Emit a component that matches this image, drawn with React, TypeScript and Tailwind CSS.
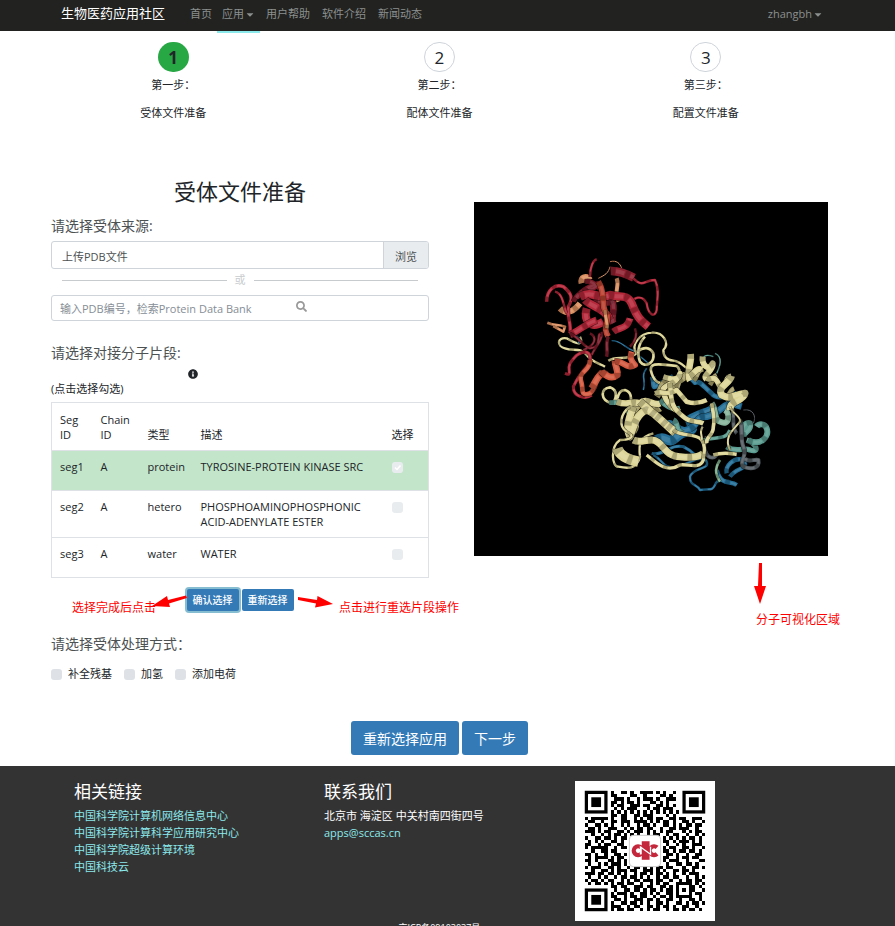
import React from "react";
import { FaCaretDown, FaInfoCircle, FaSearch } from "react-icons/fa";

interface Segment {
  id: string;
  chain: string;
  type: string;
  description: string;
  selected: boolean;
}

const segments: Segment[] = [
  { id: "seg1", chain: "A", type: "protein", description: "TYROSINE-PROTEIN KINASE SRC", selected: true },
  { id: "seg2", chain: "A", type: "hetero", description: "PHOSPHOAMINOPHOSPHONIC ACID-ADENYLATE ESTER", selected: false },
  { id: "seg3", chain: "A", type: "water", description: "WATER", selected: false },
];

const steps = [
  { label: "第一步：", name: "受体文件准备", active: true },
  { label: "第二步：", name: "配体文件准备", active: false },
  { label: "第三步：", name: "配置文件准备", active: false },
];

const treatments = ["补全残基", "加氢", "添加电荷"];

const links = [
  "中国科学院计算机网络信息中心",
  "中国科学院计算科学应用研究中心",
  "中国科学院超级计算环境",
  "中国科技云",
];

// data modules only, the three finder squares are drawn on top
const qrRows = [
  "........#..##.#..####.#.#..#.........",
  "........##....##..#....##.#..........",
  ".........###.#..#.###.#..###.........",
  "........##.#.##.#...##.#.#...........",
  "........#.##..###.##..##.#.#.........",
  ".........#.#.###...#.##.###..........",
  "........#.#.#.#.#.#.#.#.#.#.#........",
  "........##.##..##.###....#.#.........",
  "#.#####.#..##..#.#.##.##..##.##..###.",
  ".##..#..##.###.####.#.#.##.#..##.#..#",
  "#..##.#.#..#.#..#.##.#..##.#.#.##.##.",
  ".##.#..###..#.#.##.##..#..##.###..#..",
  "###.#.##..##.#.###.#.#.#.##...#.#.##.",
  "..#..#.#.##.#.#.#..#.##..#.##..#..#.#",
  "#..##.##.#.##...........#.#.#.#.##.#.",
  ".#.#.#..##.#............##.#.###.#.#.",
  "##..#.##..##.............#..#.#..###.",
  "#.#####..#.##...........#.##..##.#..#",
  "..#..##.##..............##.#.##.##.#.",
  "##.#..#..##.#............##.#..#..##.",
  ".#.####.#.##............##..#.##.##..",
  "##.#...##.#.#...........#.###..#...##",
  ".#..#.#.###.#............#..##.##.#..",
  "#.###..##.#..#.##.#.#.##.##...#..##.#",
  "..#..##.#.###.##..###.#.#..##.##.#...",
  "###.##.##.#.#..#.##.#.##.#.#..#.###..",
  ".#..#.#..#.##.##.#.#..#.##.##..#..#.#",
  "#.##.#.##..#.#.##.###.##..#..#.##.##.",
  ".#.##.#.#.##.##..#..#.#.##..#####.#.#",
  "........##.##..###.##..##.#.#...##.#.",
  ".........#..##.##.#.##.#.##.#.#.##..#",
  "........#.###.#..##.#.#..##.#...#.##.",
  "........##..#.##.##..#.##.#.#####..#.",
  ".........##.#..###.##.#..##..#..##.#.",
  "........#..##.##.#.#..##.#..##.#.##.#",
  "........###..#.##..##.#.##.#..##..#..",
  "........#.##.##..#.#.##..#.##.#.##.#.",
];

const qrPath = qrRows
  .map((row, y) => row.split("").map((cell, x) => (cell === "#" ? `M${x} ${y}h1v1h-1z` : "")).join(""))
  .join("");

const QrCode: React.FC = () => (
  <svg viewBox="-3 -3 43 43" className="block w-[140px] h-[140px] bg-white" role="img" aria-label="QR">
    <path d={qrPath} fill="#000" shapeRendering="crispEdges" />
    {[[0, 0], [30, 0], [0, 30]].map(([x, y]) => (
      <g key={`${x}-${y}`} transform={`translate(${x} ${y})`}>
        <path d="M0 0h7v7H0z" fill="#000" />
        <path d="M1 1h5v5H1z" fill="#fff" />
        <path d="M2 2h3v3H2z" fill="#000" />
      </g>
    ))}
    <rect x="13.7" y="13.7" width="9.6" height="9.6" rx="1.2" fill="#fff" stroke="#c9c9c9" strokeWidth="0.3" />
    <g fill="none" stroke="#c4273c" strokeWidth="1.3">
      <path d="M17.3 17.4a1.35 1.35 0 1 0 0 2" />
      <path d="M22.2 17.4a1.35 1.35 0 1 0 0 2" />
    </g>
    <path d="M17.5 15.5h2.4v5.7h-2.4z" fill="#c4273c" />
    <path d="M17.1 19.6v-2.300l3.100 2.200v-2.300" fill="none" stroke="#fff" strokeWidth="0.4" />
  </svg>
);

interface Ribbon {
  d: string;
  c: string;
  w: number;
}

const blue = "#246f98";
const teal = "#5b9c90";
const cream = "#ddd596";
const khaki = "#a9a06a";
const red = "#b5283a";
const darkRed = "#7d1b29";
const orange = "#d4593f";
const sand = "#dd9061";
const gray = "#555e63";

const ribbons: Ribbon[] = [
  // blue lobe, lies at the back
  { d: "M245 302C275 302 285 325 310 332C330 350 345 360 355 370", c: blue, w: 4 },
  { d: "M350 385C330 410 350 420 340 450", c: blue, w: 5 },
  { d: "M368 410C375 440 365 445 385 435L430 410", c: blue, w: 16 },
  { d: "M470 400L495 428C510 420 520 440 545 460C560 480 590 470 620 460", c: blue, w: 14 },
  { d: "M380 600C410 580 410 620 440 590C470 560 500 590 480 540C510 520 540 520 560 500", c: blue, w: 30 },
  { d: "M400 560C430 530 440 580 470 570C510 560 490 530 530 530C570 520 570 500 600 490L635 500", c: blue, w: 20 },
  { d: "M365 640C400 650 420 610 460 620C500 640 490 650 520 660", c: blue, w: 9 },
  { d: "M370 645C400 660 400 690 440 680C480 670 520 640 530 665C540 690 490 680 480 710C480 740 500 730 510 750C540 745 545 755 555 735C560 720 580 710 620 735", c: blue, w: 7 },
  { d: "M560 690C575 740 600 720 620 735M590 700C585 680 610 650 640 660C660 690 620 680 600 710", c: blue, w: 13 },
  { d: "M590 620C620 640 640 620 660 630C690 640 680 610 650 600", c: teal, w: 16 },
  { d: "M640 590C630 560 650 545 660 550C665 575 640 575 640 590M655 600C690 620 720 590 710 565C705 548 685 552 680 560", c: teal, w: 18 },
  { d: "M640 510C670 505 680 530 670 550", c: gray, w: 3 },
  { d: "M630 540C640 570 630 600 640 620C655 650 625 660 640 680C665 690 690 685 685 660C675 655 655 670 645 655", c: gray, w: 12 },
  { d: "M530 590C510 630 540 670 560 645M600 490C620 520 600 560 620 580", c: gray, w: 11 },
  { d: "M555 340C580 350 570 380 560 400M550 350C525 340 515 350 520 370", c: teal, w: 4 },
  { d: "M545 490C560 510 550 540 570 545C600 560 600 520 585 510", c: "#86b39a", w: 18 },
  { d: "M520 600C560 590 590 600 600 570", c: teal, w: 11 },
  { d: "M430 540C450 550 430 570 460 580M390 480C410 500 430 510 450 505", c: teal, w: 16 },
  { d: "M570 660C550 690 560 710 570 725", c: "#7fae8a", w: 8 },
  // pale yellow lobe
  { d: "M235 362C260 345 290 365 320 340C300 315 330 280 365 278C400 275 420 310 400 330C400 350 410 360 430 362C455 365 465 385 480 390", c: cream, w: 7 },
  { d: "M322 335C340 320 360 320 370 340C375 370 345 385 330 365C320 340 325 310 345 290", c: cream, w: 8 },
  { d: "M480 350C500 345 480 380 475 395C440 415 455 385 440 378C400 375 350 360 365 400C375 430 395 435 410 425", c: cream, w: 8 },
  { d: "M380 470C400 440 395 420 430 420C460 430 460 400 490 400M400 470C430 460 420 430 450 440", c: khaki, w: 20 },
  { d: "M492 422C505 405 500 392 520 388M540 435C550 420 545 412 560 405M585 480C595 470 600 450 612 445", c: khaki, w: 14 },
  { d: "M482 342C485 370 468 400 480 422", c: cream, w: 20 },
  { d: "M480 408C495 400 500 380 515 390M518 350C515 375 535 395 548 370C550 395 515 405 530 418", c: cream, w: 18 },
  { d: "M530 415C545 425 550 395 570 440C600 430 580 415 604 408", c: cream, w: 16 },
  { d: "M604 408C600 430 560 440 575 465C600 480 610 465 645 460C640 485 598 480 600 510", c: cream, w: 21 },
  { d: "M400 410C430 420 450 420 450 400C440 440 390 430 400 460C410 490 430 510 450 515", c: cream, w: 16 },
  { d: "M375 460C400 450 410 470 440 450L470 485C500 495 520 485 530 480M420 430C425 480 420 500 460 530C480 550 500 540 520 550", c: cream, w: 14 },
  { d: "M245 490C210 480 210 445 240 442C265 450 260 480 245 490C270 495 255 450 285 450C320 460 290 510 310 510", c: cream, w: 8 },
  { d: "M238 488h24M290 510C300 530 310 520 320 535", c: teal, w: 14 },
  { d: "M310 575C330 550 300 540 320 500C350 480 370 520 390 505", c: khaki, w: 20 },
  { d: "M260 485C300 500 300 480 330 490C350 470 370 500 390 490", c: cream, w: 19 },
  { d: "M330 485C380 530 400 545 435 580M310 500C290 550 290 570 300 590C310 560 320 520 350 510C380 520 400 550 430 570", c: cream, w: 22 },
  { d: "M300 500C270 520 265 560 290 575C320 590 300 600 270 600C240 620 245 680 265 680C290 685 320 690 330 650C325 610 330 590 370 580", c: cream, w: 7 },
  { d: "M262 625C270 650 300 660 325 665", c: cream, w: 31 },
  { d: "M310 600C330 610 340 600 365 600C400 600 400 650 450 650C490 655 510 650 520 640", c: cream, w: 21 },
  { d: "M430 570C450 590 500 580 515 600C530 625 520 640 520 660C510 690 470 670 450 675C410 700 380 670 350 645", c: cream, w: 10 },
  { d: "M545 490C550 520 555 540 550 560C550 590 525 590 530 610M550 645C580 635 600 640 620 643", c: cream, w: 11 },
  { d: "M600 630C580 590 610 570 630 545C635 530 605 520 600 500M518 560C505 580 520 590 515 600", c: cream, w: 6 },
  // red lobe
  { d: "M52 248C75 258 85 252 105 260L100 275L70 258", c: sand, w: 8 },
  { d: "M90 205C110 225 130 215 150 190M155 130C150 110 170 105 180 120", c: sand, w: 18 },
  { d: "M260 115C270 140 250 150 265 185", c: sand, w: 12 },
  { d: "M150 290C160 310 150 320 110 295C80 290 80 320 105 325C130 335 150 320 170 345C190 370 210 370 225 380", c: cream, w: 7 },
  { d: "M130 290C145 285 150 300 145 310M195 258h30", c: blue, w: 6 },
  { d: "M50 185C50 150 75 130 100 140C125 160 130 175 115 200C110 230 125 250 120 280", c: red, w: 10 },
  { d: "M75 155C100 160 100 200 110 220M180 110C180 80 190 60 200 58", c: red, w: 7 },
  { d: "M240 65C260 60 270 70 275 85M240 80C235 100 225 105 205 115", c: sand, w: 3 },
  { d: "M130 185C150 140 190 160 205 130C190 135 150 150 140 175M165 125C190 120 200 140 215 150", c: darkRed, w: 14 },
  { d: "M242 93C265 92 290 102 312 113", c: "#8f2030", w: 25 },
  { d: "M310 115C340 145 340 120 375 120C390 150 380 180 380 210C375 235 355 225 350 190C335 160 310 175 300 190", c: red, w: 7 },
  { d: "M190 190C210 170 230 200 245 180C260 210 240 230 250 250", c: darkRed, w: 20 },
  { d: "M150 170C190 150 205 180 240 165C270 175 290 160 305 190C320 230 330 240 355 260", c: red, w: 25 },
  { d: "M165 180C185 200 225 205 240 240M170 205C160 240 180 270 220 245", c: red, w: 24 },
  { d: "M205 125C230 160 210 200 230 220C240 250 215 260 235 290", c: "#b9402f", w: 17 },
  { d: "M235 290C225 310 235 330 230 350", c: darkRed, w: 10 },
  { d: "M250 275C270 260 290 270 300 235M120 285C150 270 170 250 200 240", c: red, w: 20 },
  { d: "M315 265C325 290 310 310 300 320M120 280C150 295 160 320 180 325C215 320 200 290 210 280M180 280C200 290 200 315 160 330M215 275C220 300 195 320 185 345", c: darkRed, w: 7 },
  { d: "M105 400C130 410 110 390 120 370C135 350 140 340 165 335C190 340 180 370 170 380C150 400 140 420 130 440C130 470 165 480 185 465", c: red, w: 9 },
  { d: "M180 360C180 400 140 390 155 430C160 450 150 470 180 460C205 440 195 410 215 395", c: orange, w: 14 },
  { d: "M185 445C200 420 210 390 230 405", c: orange, w: 21 },
  { d: "M215 395C235 415 250 415 262 405C265 390 255 380 255 362", c: orange, w: 20 },
  { d: "M255 365C280 360 290 390 315 375C300 360 300 350 305 335", c: orange, w: 18 },
  { d: "M225 210C225 235 235 250 230 265", c: sand, w: 10 },
];

const ProteinView: React.FC = () => (
  <svg viewBox="-168 -114 1062 1062" className="block w-full bg-black" role="img" aria-label="分子结构">
    <g fill="none" strokeLinecap="butt" strokeLinejoin="round">
      {ribbons.map((r) => (
        <g key={r.d}>
          <path d={r.d} stroke="#000" strokeOpacity="0.6" strokeWidth={r.w + 3} />
          <path d={r.d} stroke={r.c} strokeWidth={r.w} />
          <path d={r.d} stroke="#000" strokeOpacity="0.22" strokeWidth={r.w} strokeDasharray="14 31" />
          <path d={r.d} stroke="#fff" strokeOpacity="0.12" strokeWidth={r.w / 2} strokeDasharray="26 19" strokeDashoffset="-16" />
        </g>
      ))}
    </g>
  </svg>
);

const checkboxClass =
  "block w-[11px] h-[11px] shrink-0 appearance-none rounded-[3px] bg-[#e9ecef]";

const Navbar: React.FC = () => (
  <nav className="bg-[#222220] text-[11px] text-[#8b908f]">
    <div className="flex h-[31px] items-stretch pl-[61px] pr-[72px]">
      <a href="#" className="flex items-center pb-[3px] text-[13px] text-white">生物医药应用社区</a>
      <div className="ml-5 flex items-stretch">
        <a href="#" className="flex items-center px-[5px] pb-[3px]">首页</a>
        <a href="#" className="relative flex items-center px-[5px] pb-[3px]">
          应用
          <FaCaretDown className="ml-px h-[11px] w-[10px]" />
          <span className="absolute inset-x-0 top-full h-[2px] bg-[#8be9ec]"></span>
        </a>
        <a href="#" className="flex items-center px-[6px] pb-[3px]">用户帮助</a>
        <a href="#" className="flex items-center px-[6px] pb-[3px]">软件介绍</a>
        <a href="#" className="flex items-center px-[6px] pb-[3px]">新闻动态</a>
      </div>
      <a href="#" className="ml-auto flex items-center pb-[3px]">
        zhangbh
        <FaCaretDown className="ml-px h-[11px] w-[10px]" />
      </a>
    </div>
  </nav>
);

const SegmentTable: React.FC = () => (
  <table className="mt-[5px] w-full table-fixed border-collapse border border-[#dee2e6] text-left leading-[15px]">
    <colgroup>
      <col className="w-[41px]" />
      <col className="w-[47px]" />
      <col className="w-[53px]" />
      <col />
      <col className="w-[45px]" />
    </colgroup>
    <thead>
      <tr className="h-12 align-bottom">
        <th className="px-2 py-2 font-normal">Seg ID</th>
        <th className="px-2 py-2 font-normal">Chain ID</th>
        <th className="px-2 py-2 font-normal">类型</th>
        <th className="px-2 py-2 font-normal">描述</th>
        <th className="px-2 py-2 font-normal">选择</th>
      </tr>
    </thead>
    <tbody>
      {segments.map((segment) => (
        <tr
          key={segment.id}
          className={`h-10 border-t border-[#dee2e6] align-top ${segment.selected ? "bg-[#c3e6cb]" : ""}`}
        >
          <td className="px-2 py-2">{segment.id}</td>
          <td className="px-2 py-2">{segment.chain}</td>
          <td className="px-2 py-2">{segment.type}</td>
          <td className="px-2 py-2">{segment.description}</td>
          <td className="px-2 py-[11px]">
            <span className="relative block w-[11px]">
              <input
                type="checkbox"
                aria-label={segment.id}
                defaultChecked={segment.selected}
                className={checkboxClass}
              />
              {segment.selected && (
                <svg viewBox="0 0 11 11" className="pointer-events-none absolute inset-0">
                  <path d="M3 5.5l2 2 3.5-4" fill="none" stroke="#fff" strokeWidth="1.5" />
                </svg>
              )}
            </span>
          </td>
        </tr>
      ))}
    </tbody>
  </table>
);

const ReceptorForm: React.FC = () => (
  <section className="flex-1">
    <h1 className="text-center text-[22px] leading-7">受体文件准备</h1>

    <h2 className="mt-[11px] text-[14px] leading-5 text-[#4c5152]">请选择受体来源:</h2>
    <div className="mt-[5px] flex h-7 overflow-hidden rounded-[3px] border border-[#ced4da] text-[#4c5152]">
      <span className="flex flex-1 items-center px-[10px] pt-1">上传PDB文件</span>
      <button className="border-l border-[#ced4da] bg-[#e9ecef] px-[11px] pt-1">浏览</button>
    </div>

    <div className="mt-[3px] flex items-center gap-2 px-[11px] leading-4 text-[#c8cbce]">
      <span className="h-px flex-1 bg-[#c8cbce]"></span>
      或
      <span className="h-px flex-1 bg-[#c8cbce]"></span>
    </div>

    <div className="mt-[7px] relative">
      <input
        type="text"
        aria-label="PDB编号"
        placeholder="输入PDB编号，检索Protein Data Bank"
        className="block h-[26px] w-full rounded-[3px] border border-[#ced4da] px-2 placeholder:text-[#868e96]"
      />
      <FaSearch className="absolute left-[245px] top-[6px] h-[11px] w-[11px] text-[#999]" />
    </div>

    <h2 className="mt-[22px] text-[14px] leading-5 text-[#4c5152]">请选择对接分子片段:</h2>
    <FaInfoCircle className="ml-[137px] mt-[6px] block h-[10px] w-[10px]" />
    <p className="mt-[2px] leading-4">(点击选择勾选)</p>

    <SegmentTable />

    <div className="relative mt-[11px] flex justify-center gap-[3px] text-[10px] font-medium text-white">
      <button className="h-[22px] rounded-[2px] bg-[#337ab7] px-[6px] ring-2 ring-[#86bdd0]">确认选择</button>
      <button className="h-[22px] rounded-[2px] bg-[#337ab7] px-[6px]">重新选择</button>
      <span className="absolute left-[21px] top-[10px] whitespace-nowrap text-[12px] font-normal leading-[18px] text-[#f00]">
        选择完成后点击
      </span>
      <svg viewBox="0 0 36 16" className="absolute left-[100px] top-[5px] h-4 w-9" fill="#f00">
        <path d="M35 1.5L17 6l-1-4L1 12l18 1-1-3.500L36 4z" />
      </svg>
      <svg viewBox="0 0 36 16" className="absolute left-[247px] top-[5px] h-4 w-9" fill="#f00">
        <path d="M0 3l19 3 .5-4L35 10l-18 3.500 1-4L0 6z" />
      </svg>
      <span className="absolute left-[288px] top-[10px] whitespace-nowrap text-[12px] font-normal leading-[18px] text-[#f00]">
        点击进行重选片段操作
      </span>
    </div>

    <h2 className="mt-[23px] text-[14px] leading-5 text-[#4c5152]">请选择受体处理方式：</h2>
    <div className="mt-3 flex gap-3 leading-4">
      {treatments.map((treatment) => (
        <label key={treatment} className="flex items-center gap-[6px]">
          <input type="checkbox" className="block h-[11px] w-[11px] appearance-none rounded-[3px] bg-[#dee2e6]" />
          {treatment}
        </label>
      ))}
    </div>
  </section>
);

const Footer: React.FC = () => (
  <footer className="flex-1 bg-[#333] pt-[15px] text-white">
    <div className="flex pl-[74px] leading-[17px]">
      <div className="w-[250px]">
        <h3 className="mb-4 h-[10px] text-[17px] leading-[22px]">相关链接</h3>
        <ul>
          {links.map((link) => (
            <li key={link}>
              <a href="#" className="text-[#8be9ec]">{link}</a>
            </li>
          ))}
        </ul>
      </div>
      <div className="w-[251px]">
        <h3 className="mb-4 h-[10px] text-[17px] leading-[22px]">联系我们</h3>
        <p>北京市 海淀区 中关村南四街四号</p>
        <a href="#" className="text-[#8be9ec]">apps@sccas.cn</a>
      </div>
      <QrCode />
    </div>
    <p className="pr-4 text-center text-[9px] leading-[14px]">京ICP备09103037号</p>
  </footer>
);

export default function App() {
  return (
    <div className="flex h-screen flex-col overflow-hidden bg-white font-['Open_Sans','Noto_Sans_CJK_SC',sans-serif] text-[11px] text-[#212529]">
      <Navbar />

      <main className="pl-10 pr-14 pb-[11px]">
        <ol className="flex pt-[11px] text-center">
          {steps.map((step, index) => (
            <li key={step.name} className="flex flex-1 flex-col items-center leading-[17px]">
              <span
                className={`flex h-[30px] w-[31px] items-center justify-center rounded-full text-[17px] ${
                  step.active ? "bg-[#28a745] font-bold" : "border border-[#ced4da]"
                }`}
              >
                {index + 1}
              </span>
              <span className="mt-1">{step.label}</span>
              <span className="mt-[11px]">{step.name}</span>
            </li>
          ))}
        </ol>

        <div className="mt-[56px] flex gap-[45px] px-[11px]">
          <ReceptorForm />
          <section className="relative w-[354px] pt-[25px]">
            <ProteinView />
            <svg viewBox="0 0 12 42" className="absolute left-[280px] top-[386px] h-[42px] w-3" fill="#f00">
              <path d="M5 0h3v23h4L6 41 0 23h4z" />
            </svg>
            <span className="absolute left-[282px] top-[434px] whitespace-nowrap text-[12px] leading-[18px] text-[#f00]">
              分子可视化区域
            </span>
          </section>
        </div>

        <div className="mt-[39px] flex justify-center gap-[3px] text-[14px] text-white">
          <button className="h-[34px] rounded-[3px] bg-[#337ab7] px-3">重新选择应用</button>
          <button className="h-[34px] rounded-[3px] bg-[#337ab7] px-3">下一步</button>
        </div>
      </main>

      <Footer />
    </div>
  );
}
